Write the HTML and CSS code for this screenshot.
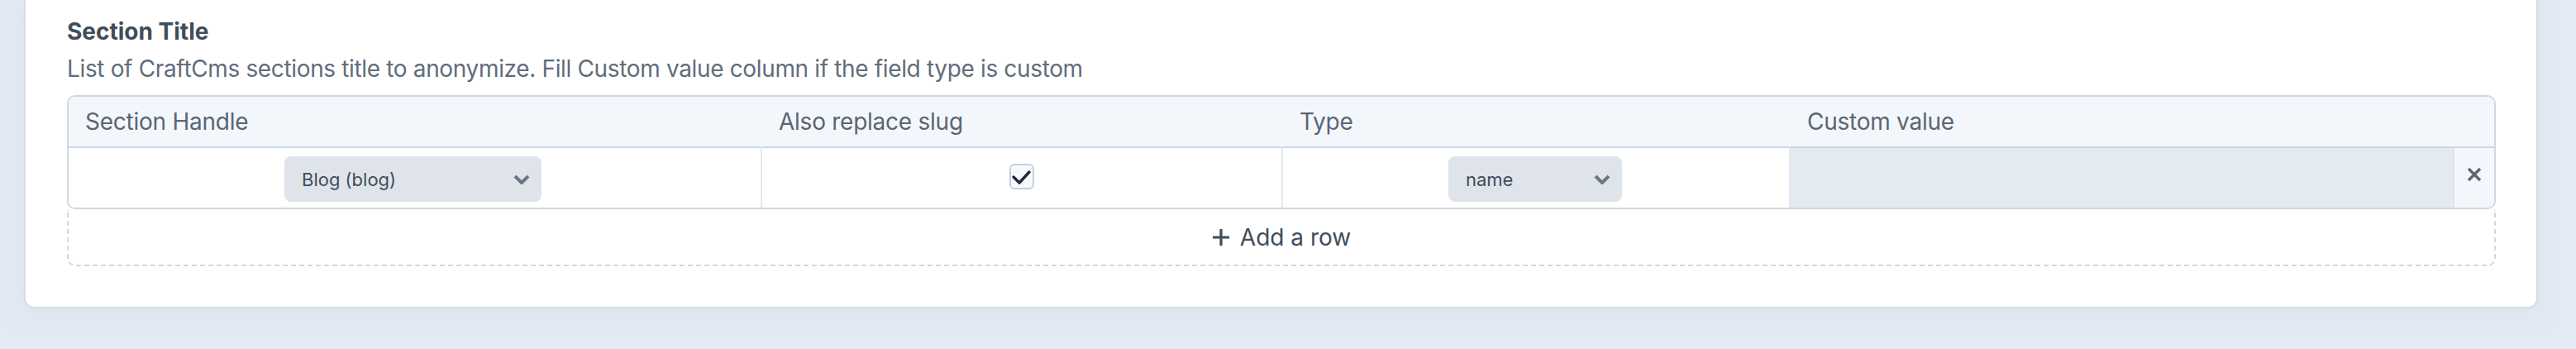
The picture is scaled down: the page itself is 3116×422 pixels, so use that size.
FILE: index.html
```html
<!DOCTYPE html>
<html lang="en">
<head>
<meta charset="utf-8">
<title>Section Title</title>
<link rel="stylesheet" href="styles.css">
</head>
<body>
<div class="page">
  <div class="card">
    <div class="field">
      <div class="heading">Section Title</div>
      <div class="instructions">List of CraftCms sections title to anonymize. Fill Custom value column if the field type is custom</div>
      <div class="etable">
        <div class="th">Section Handle</div>
        <div class="th div">Also replace slug</div>
        <div class="th div">Type</div>
        <div class="th div span2">Custom value</div>

        <div class="td center">
          <div class="select wide">
            <span class="sel-text">Blog (blog)</span>
            <svg class="chev" width="20" height="12" viewBox="0 0 20 12"><polyline points="2,2 10,10 18,2" fill="none" stroke="#6b7785" stroke-width="4" stroke-linejoin="miter"/></svg>
          </div>
        </div>
        <div class="td div center">
          <span class="checkbox">
            <svg width="26" height="27" viewBox="0 0 26 27"><polyline points="3,14 10,21 22,8" fill="none" stroke="#1f2a37" stroke-width="3.4" stroke-linecap="round" stroke-linejoin="round"/></svg>
          </span>
        </div>
        <div class="td div center">
          <div class="select narrow">
            <span class="sel-text">name</span>
            <svg class="chev" width="20" height="12" viewBox="0 0 20 12"><polyline points="2,2 10,10 18,2" fill="none" stroke="#6b7785" stroke-width="4" stroke-linejoin="miter"/></svg>
          </div>
        </div>
        <div class="td div disabled"></div>
        <div class="td div action">
          <svg width="18" height="18" viewBox="0 0 18 18"><path d="M2 2 L16 16 M16 2 L2 16" stroke="#596673" stroke-width="3.4" stroke-linecap="butt"/></svg>
        </div>
      </div>
      <div class="add-row">
        <svg width="22" height="22" viewBox="0 0 22 22"><path d="M11 1 V21 M1 11 H21" stroke="#3f4d5a" stroke-width="3.2"/></svg>
        <span>Add a row</span>
      </div>
    </div>
  </div>
</div>
</body>
</html>
```
FILE: styles.css
```css
* { box-sizing: border-box; }
html, body { margin: 0; padding: 0; }
body {
  background: #e4eaf3;
  font-family: Inter, "Liberation Sans", sans-serif;
  color: #3f4d5a;
  width: 3116px;
  height: 422px;
  overflow: hidden;
}
.page {
  padding: 0 48px 0 31px;
}
.card {
  background: #ffffff;
  border-radius: 0 0 10px 10px;
  box-shadow: 0 0 0 2px #d3dce7, 0 4px 24px rgba(205, 216, 228, 0.55);
  padding: 18px 49px 49px 50px;
}
.heading {
  font-weight: 700;
  font-size: 28px;
  line-height: 40px;
  color: #3f4d5a;
}
.instructions {
  margin-top: 5px;
  font-size: 28px;
  line-height: 40px;
  letter-spacing: -0.35px;
  color: #606d7b;
}
.etable {
  margin-top: 12px;
  display: grid;
  grid-template-columns: 837px 630px 614px 803px 50px;
  border: 2px solid #cdd8e4;
  border-radius: 10px;
  overflow: hidden;
}
.th {
  height: 62px;
  background: #f3f7fc;
  border-bottom: 2px solid #cdd8e4;
  padding: 0 20px;
  display: flex;
  align-items: center;
  font-size: 28px;
  letter-spacing: -0.25px;
  color: #596673;
}
.th.div { border-left: 2px solid #f3f7fc; }
.th.span2 { grid-column: span 2; }
.td {
  height: 72px;
  background: #ffffff;
  display: flex;
  align-items: center;
}
.td.div { border-left: 2px solid #e3e8ef; }
.td.center { justify-content: center; }
.td.disabled { background: #e4eaf2; }
.td.action {
  background: #f3f7fc;
  justify-content: center;
  border-left-color: #dde3ea;
  padding-bottom: 8px;
}
.select {
  height: 55px;
  margin-top: 3px;
  border-radius: 8px;
  background: #dfe4eb;
  display: flex;
  align-items: center;
  justify-content: space-between;
  padding: 0 14px 0 21px;
  font-size: 22px;
  color: #3f4d5a;
}
.select.wide { width: 311px; margin-left: -4px; }
.select.narrow { width: 210px; margin-left: -2px; }
.sel-text { line-height: 1; }
.chev { display: block; }
.checkbox {
  width: 30px;
  height: 31px;
  margin-top: -4px;
  border: 2px solid #c6cfdb;
  border-radius: 6px;
  background: #f7f9fc;
  display: flex;
  align-items: center;
  justify-content: center;
}
.checkbox svg { display: block; }
.add-row {
  height: 69px;
  border: 2px dashed #cdd8e4;
  border-top: none;
  border-radius: 0 0 10px 10px;
  display: flex;
  align-items: center;
  justify-content: center;
  gap: 12px;
  font-size: 28px;
  color: #3f4d5a;
}
.add-row svg { display: block; }
```
